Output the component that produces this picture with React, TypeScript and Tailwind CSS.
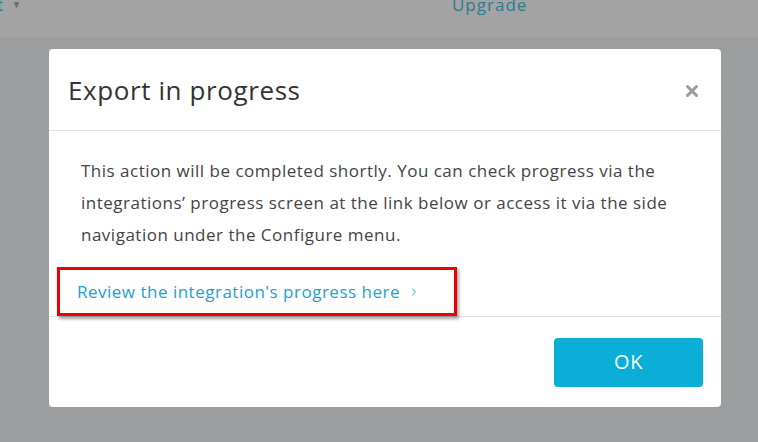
import { X, ChevronRight } from "lucide-react";

export default function App() {
  return (
    <div
      className="relative w-[758px] h-[442px] overflow-hidden bg-[#9d9ea0] tracking-[0.5px]"
      style={{ fontFamily: "'Open Sans', Lato, sans-serif" }}
    >
      {/* dimmed page behind */}
      <div className="h-[39px] bg-[#a3a3a3] border-b border-[#989a9c] flex items-start">
        <div className="flex items-center gap-2 -mt-[8px] text-[#2a7d95] text-[17px]">
          <span className="-ml-[3px]">t</span>
          <span className="text-[10px] text-[#6b6d70]">▼</span>
        </div>
        <div className="ml-[430px] -mt-[8px] text-[#2a7d95] text-[17px] tracking-[1px]">Upgrade</div>
      </div>

      {/* modal */}
      <div className="absolute left-[49px] top-[49px] w-[672px] h-[358px] bg-white rounded-[4px] flex flex-col">
        <div className="h-[82px] border-b border-[#e3e3e3] flex items-center justify-between pl-[19px] pr-[20px] pt-[2px]">
          <h2 className="text-[26px] text-[#333333] font-normal tracking-[0.6px]">Export in progress</h2>
          <X className="w-[18px] h-[18px] text-[#9a9a9a]" strokeWidth={4} />
        </div>
        <div className="flex-1 border-b border-[#e3e3e3] px-[32px] pt-[24px]">
          <p className="text-[17px] leading-[32px] text-[#444444] pr-[20px]">
            This action will be completed shortly. You can check progress via the integrations’ progress screen at the
            link below or access it via the side navigation under the Configure menu.
          </p>
          <div className="relative mt-[16px] -ml-[24px] w-[400px] h-[49px] border-[3px] border-[#ee0000] shadow-[2px_3px_3px_rgba(0,0,0,0.35)] flex items-center pl-[17px]">
            <a className="flex items-center gap-[8px] text-[17px] text-[#1aa1cf]">
              Review the integration's progress here
              <ChevronRight className="w-[12px] h-[12px]" strokeWidth={2} />
            </a>
          </div>
        </div>
        <div className="h-[90px] flex items-center justify-end pr-[18px]">
          <button className="w-[149px] h-[49px] rounded-[4px] bg-[#0aaed7] text-white text-[20px]">OK</button>
        </div>
      </div>
    </div>
  );
}
